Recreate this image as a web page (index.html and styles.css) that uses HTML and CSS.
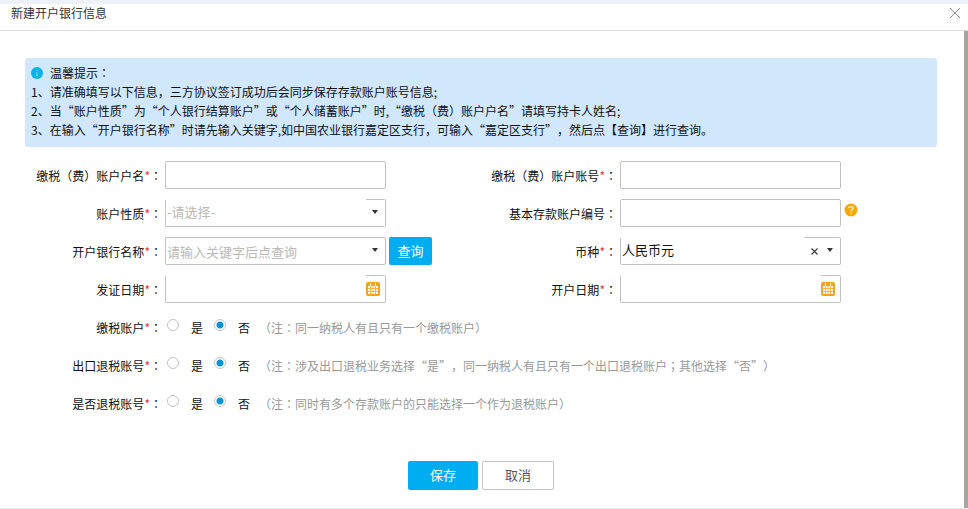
FILE: index.html
```html
<!DOCTYPE html>
<html lang="zh-CN">
<head>
<meta charset="utf-8">
<title>新建开户银行信息</title>
<link rel="stylesheet" href="styles.css">
</head>
<body>
<div class="dialog">
  <header class="dialog-header">
    <h1 class="title">新建开户银行信息</h1>
    <button type="button" class="close" aria-label="关闭">
      <svg width="12" height="12" viewBox="0 0 12 12"><path d="M1 1l10 10M11 1L1 11" fill="none" stroke="#8e8e8e" stroke-width="1"/></svg>
    </button>
  </header>
  <div class="dialog-body">
    <main class="content">
      <section class="notice">
        <p class="notice-title">
          <svg width="12" height="12" viewBox="0 0 12 12"><circle cx="6" cy="6" r="6" fill="#06b2e6"/><path d="M6 3v1M5 5.500h1v3M5 8.500h2" fill="none" stroke="#7fd8f5" stroke-width="1"/></svg>
          <span>温馨提示<span class="mid" lang="zh-TW">：</span></span>
        </p>
        <p>1、请准确填写以下信息，三方协议签订成功后会同步保存存款账户账号信息;</p>
        <p>2、当“账户性质”为“个人银行结算账户”或“个人储蓄账户”时,“缴税<span class="mid" lang="zh-TW">（</span>费<span class="mid" lang="zh-TW">）</span>账户户名”请填写持卡人姓名;</p>
        <p>3、在输入“开户银行名称”时请先输入关键字,如中国农业银行嘉定区支行，可输入“嘉定区支行”，然后点【查询】进行查询。</p>
      </section>

      <form class="form">
        <div class="row">
          <label class="label" for="holder">缴税<span class="mid" lang="zh-TW">（</span>费<span class="mid" lang="zh-TW">）</span>账户户名<i>*</i><span class="mid" lang="zh-TW">：</span></label>
          <div class="field"><input id="holder" type="text"></div>
        </div>
        <div class="row">
          <label class="label" for="number">缴税<span class="mid" lang="zh-TW">（</span>费<span class="mid" lang="zh-TW">）</span>账户账号<i>*</i><span class="mid" lang="zh-TW">：</span></label>
          <div class="field"><input id="number" type="text"></div>
        </div>

        <div class="row">
          <label class="label" for="nature">账户性质<i>*</i><span class="mid" lang="zh-TW">：</span></label>
          <div class="field open-top">
            <select id="nature" class="unset"><option>-请选择-</option></select>
            <svg class="caret" width="6" height="4" viewBox="0 0 6 4"><path d="M0 0h6L3 4z" fill="#333"/></svg>
          </div>
        </div>
        <div class="row">
          <label class="label" for="basic">基本存款账户编号<span class="mid" lang="zh-TW">：</span></label>
          <div class="field"><input id="basic" type="text"></div>
          <button type="button" class="help" aria-label="帮助">
            <svg width="14" height="14" viewBox="0 0 14 14"><circle cx="7" cy="7" r="6.500" fill="#f5a800"/><path d="M4.800 5.300C4.800 3 9.200 3 9.200 5.300 9.200 6.700 7 6.700 7 8.500M7 9.700v1.300" fill="none" stroke="#fff0c2" stroke-width="1.400"/></svg>
          </button>
        </div>

        <div class="row">
          <label class="label" for="bank">开户银行名称<i>*</i><span class="mid" lang="zh-TW">：</span></label>
          <div class="field">
            <input id="bank" type="text" placeholder="请输入关键字后点查询">
            <svg class="caret" width="6" height="4" viewBox="0 0 6 4"><path d="M0 0h6L3 4z" fill="#333"/></svg>
          </div>
          <button type="button" class="btn primary query">查询</button>
        </div>
        <div class="row">
          <label class="label" for="currency">币种<i>*</i><span class="mid" lang="zh-TW">：</span></label>
          <div class="field open-top wide-tail">
            <select id="currency"><option>人民币元</option></select>
            <button type="button" class="clear" aria-label="清除">
              <svg width="7" height="7" viewBox="0 0 7 7"><path d="M.5.5l6 6M6.500.5l-6 6" fill="none" stroke="#444" stroke-width="1.300"/></svg>
            </button>
            <svg class="caret" width="6" height="4" viewBox="0 0 6 4"><path d="M0 0h6L3 4z" fill="#333"/></svg>
          </div>
        </div>

        <div class="row">
          <label class="label" for="issued">发证日期<i>*</i><span class="mid" lang="zh-TW">：</span></label>
          <div class="field open-top">
            <input id="issued" type="text">
            <button type="button" class="calendar" aria-label="选择日期">
              <svg width="14" height="14" viewBox="0 0 14 14"><rect width="14" height="14" rx="2" fill="#f0a31c"/><path d="M2 4h10v8H2zM4 1h1v3H4zM9 1h1v3H9z" fill="#fff"/><path d="M4.500 4v8M7 4v8M9.500 4v8M2 6.500h10M2 9.500h10" fill="none" stroke="#f2b54a" stroke-width="1"/></svg>
            </button>
          </div>
        </div>
        <div class="row">
          <label class="label" for="opened">开户日期<i>*</i><span class="mid" lang="zh-TW">：</span></label>
          <div class="field open-top">
            <input id="opened" type="text">
            <button type="button" class="calendar" aria-label="选择日期">
              <svg width="14" height="14" viewBox="0 0 14 14"><rect width="14" height="14" rx="2" fill="#f0a31c"/><path d="M2 4h10v8H2zM4 1h1v3H4zM9 1h1v3H9z" fill="#fff"/><path d="M4.500 4v8M7 4v8M9.500 4v8M2 6.500h10M2 9.500h10" fill="none" stroke="#f2b54a" stroke-width="1"/></svg>
            </button>
          </div>
        </div>

        <div class="row full" role="radiogroup" aria-labelledby="l-tax">
          <span class="label" id="l-tax">缴税账户<i>*</i><span class="mid" lang="zh-TW">：</span></span>
          <div class="choices">
            <label class="choice"><input type="radio" name="tax"><span>是</span></label>
            <label class="choice"><input type="radio" name="tax" checked><span>否</span></label>
            <span class="note"><span class="mid" lang="zh-TW">（</span>注<span class="mid" lang="zh-TW">：</span>同一纳税人有且只有一个缴税账户<span class="mid" lang="zh-TW">）</span></span>
          </div>
        </div>
        <div class="row full" role="radiogroup" aria-labelledby="l-export">
          <span class="label" id="l-export">出口退税账号<i>*</i><span class="mid" lang="zh-TW">：</span></span>
          <div class="choices">
            <label class="choice"><input type="radio" name="export"><span>是</span></label>
            <label class="choice"><input type="radio" name="export" checked><span>否</span></label>
            <span class="note"><span class="mid" lang="zh-TW">（</span>注<span class="mid" lang="zh-TW">：</span>涉及出口退税业务选择“是”，同一纳税人有且只有一个出口退税账户<span class="mid" lang="zh-TW">；</span>其他选择“否”<span class="mid" lang="zh-TW">）</span></span>
          </div>
        </div>
        <div class="row full" role="radiogroup" aria-labelledby="l-refund">
          <span class="label" id="l-refund">是否退税账号<i>*</i><span class="mid" lang="zh-TW">：</span></span>
          <div class="choices">
            <label class="choice"><input type="radio" name="refund"><span>是</span></label>
            <label class="choice"><input type="radio" name="refund" checked><span>否</span></label>
            <span class="note"><span class="mid" lang="zh-TW">（</span>注<span class="mid" lang="zh-TW">：</span>同时有多个存款账户的只能选择一个作为退税账户<span class="mid" lang="zh-TW">）</span></span>
          </div>
        </div>
      </form>

      <div class="actions">
        <button type="button" class="btn primary save">保存</button>
        <button type="button" class="btn cancel">取消</button>
      </div>
    </main>
    <div class="scroll-thumb"></div>
  </div>
</div>
</body>
</html>
```
FILE: styles.css
```css
* {
  box-sizing: border-box;
}

body {
  margin: 0;
  background: #fff;
  color: #111;
  font: 12px/19px "Noto Sans CJK SC", sans-serif;
  text-spacing-trim: space-all;
}

h1,
p {
  margin: 0;
}

button,
input,
select {
  margin: 0;
  padding: 0;
  border: 0;
  background: none;
  color: inherit;
  font: inherit;
}

svg {
  display: block;
}

/* Punctuation centred in its em box */
.mid {
  font-family: "Noto Sans CJK TC", sans-serif;
}

.dialog {
  border-top: 4px solid #edf1fa;
  border-bottom: 1px solid #e3eefa;
}

.dialog-header {
  display: flex;
  align-items: flex-start;
  justify-content: space-between;
  height: 27px;
  padding: 0 7px 0 11px;
  border-bottom: 1px solid #dcdcdc;
}

.title {
  font-size: 12px;
  font-weight: 400;
  line-height: 17px;
  color: #333;
}

.close {
  padding-top: 3px;
}

.dialog-body {
  display: flex;
}

.content {
  flex: 1;
  min-width: 0;
  padding: 27px 27px 18px 25px;
}

.scroll-thumb {
  width: 4px;
  background: #a6a6a4;
}

.notice {
  padding: 5px 6px 8px;
  border-radius: 3px;
  background: #d0e7fc;
}

.notice-title {
  display: flex;
  align-items: center;
  gap: 7px;
}

.form {
  display: grid;
  grid-template-columns: 1fr 1fr;
  row-gap: 10px;
  margin-top: 14px;
  padding-right: 2px;
}

.row {
  display: grid;
  grid-template-columns: 137px minmax(0, 221px) auto;
  column-gap: 3px;
  justify-content: start;
  align-items: center;
  height: 28px;
}

.full {
  grid-column: 1 / -1;
  grid-template-columns: 137px 1fr;
}

.label {
  text-align: right;
  white-space: nowrap;
}

.label i {
  color: #e0313c;
  font-style: normal;
}

.field {
  display: flex;
  align-items: center;
  height: 28px;
  padding-right: 7px;
  border: 1px solid #c2c2c2;
  border-radius: 2px;
  font-size: 13px;
}

/* Top edge is drawn only over the trailing icons */
.open-top {
  border-top-color: transparent;
  background: linear-gradient(#c2c2c2, #c2c2c2) right top / 20px 1px no-repeat border-box;
}

.wide-tail {
  background-size: 37px 1px;
}

.field input,
.field select {
  flex: 1;
  min-width: 0;
  height: 26px;
  padding-left: 1px;
  outline: 0;
  appearance: none;
}

.field select {
  padding-bottom: 4px;
}

.field input::placeholder,
.field .unset {
  color: #bdb8b5;
  opacity: 1;
}

.caret {
  margin-bottom: 2px;
}

.clear {
  padding: 0 9px;
}

.calendar {
  margin-right: -2px;
}

.help {
  align-self: start;
  padding-top: 4px;
}

.btn {
  height: 29px;
  padding-bottom: 2px;
  border-radius: 2px;
  font-size: 13px;
  line-height: 25px;
}

.primary {
  background: #00adf1;
  color: #fff;
}

.query {
  width: 43px;
  height: 28px;
}

.save {
  width: 70px;
}

.cancel {
  width: 72px;
  border: 1px solid #c4c4c4;
  color: #555;
}

.choices {
  display: flex;
  align-items: center;
}

.choice {
  display: flex;
  align-items: center;
  gap: 12px;
  width: 47px;
  padding-left: 2px;
}

.choice + .note {
  color: #999;
  white-space: nowrap;
}

.choice input {
  width: 12px;
  height: 12px;
  margin-bottom: 4px;
  border: 1px solid #c4c4c4;
  border-radius: 50%;
  appearance: none;
}

.choice input:checked {
  background: radial-gradient(circle, #0a94cf 3px, #fff 4px);
}

.actions {
  display: flex;
  justify-content: center;
  gap: 4px;
  margin-top: 44px;
}
```
